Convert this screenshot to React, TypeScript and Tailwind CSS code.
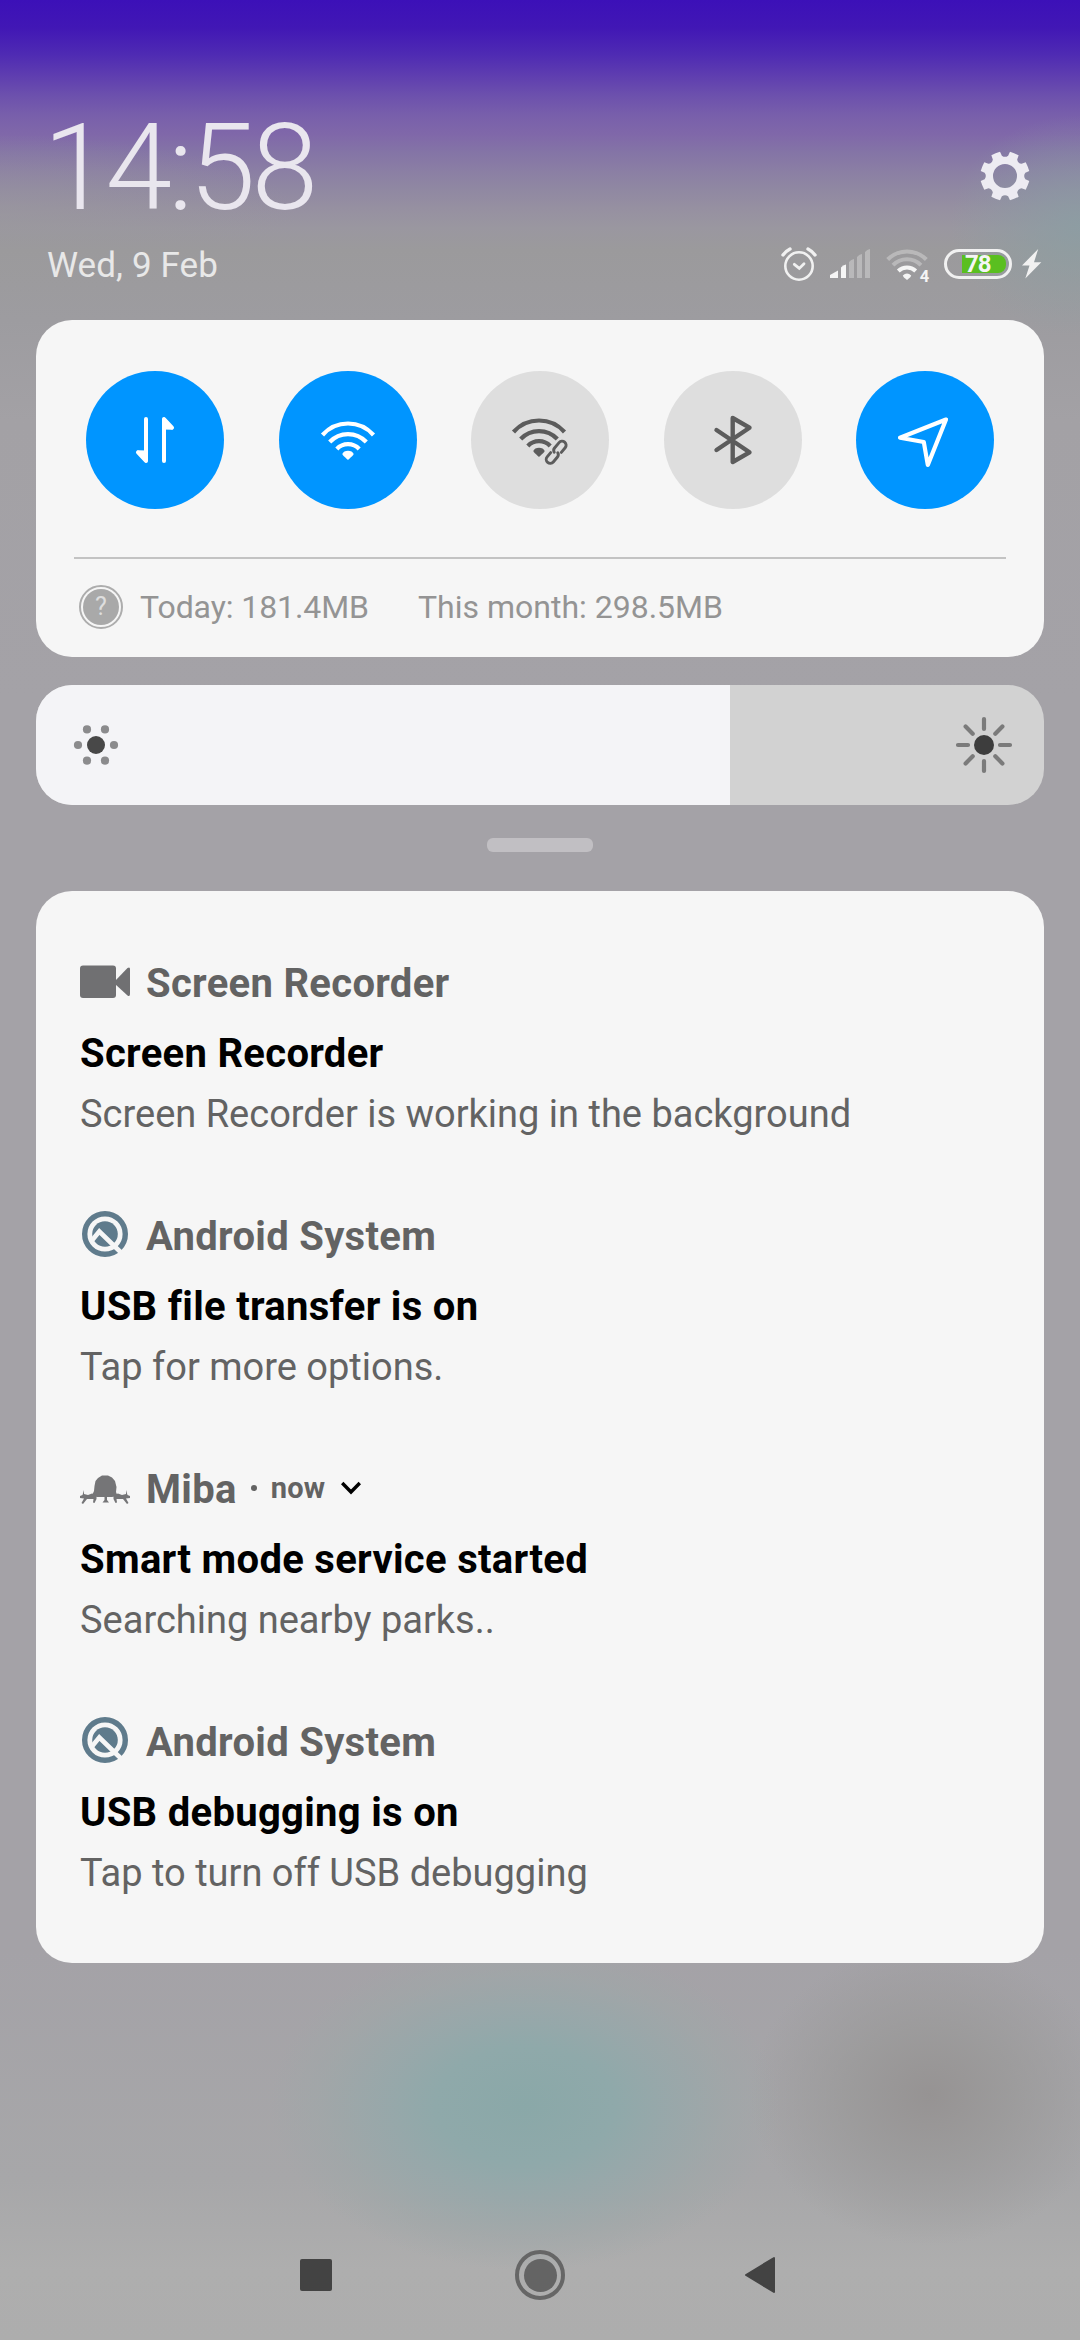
import type { ReactNode } from "react";

const gearPath = (() => {
  const pts: string[] = [];
  for (let i = 0; i < 8; i++) {
    const mid = (i * Math.PI) / 4 + Math.PI / 8;
    const p = (a: number, r: number) => `${(24 + r * Math.cos(a)).toFixed(2)} ${(24 + r * Math.sin(a)).toFixed(2)}`;
    pts.push(`${i === 0 ? "M" : "L"}${p(mid - 0.24, 20.6)}`);
    pts.push(`L${p(mid - 0.19, 24.8)}`);
    pts.push(`Q${p(mid, 24.8)} ${p(mid + 0.19, 24.8)}`);
    pts.push(`L${p(mid + 0.24, 20.6)}`);
    pts.push(`Q${p(mid + Math.PI / 8, 18)} ${p(mid + Math.PI / 4 - 0.24, 20.6)}`);
  }
  return pts.join("") + "ZM36 24A12 12 0 1 0 12 24A12 12 0 1 0 36 24Z";
})();

function Gear() {
  return (
    <svg width="48" height="48" viewBox="0 0 48 48" className="overflow-visible">
      <path d={gearPath} fill="#edebf2" fillRule="evenodd" />
    </svg>
  );
}

function Alarm() {
  return (
    <svg width="36" height="36" viewBox="782 246 36 36" fill="none" stroke="#f1f1f1" strokeLinecap="round">
      <circle cx="800" cy="266" r="13.7" strokeWidth="2.6" />
      <path d="M784 255Q787 251 791 249M816 255Q813 251 809 249" strokeWidth="3.4" />
      <path d="M795.3 264.3L800.3 268.4L805 263.8" strokeWidth="2.8" />
    </svg>
  );
}

function Signal() {
  return (
    <svg width="40" height="30" viewBox="831 249 40 30" fill="#f5f5f5">
      <path d="M831 278V275L839 270.500V278Z" />
      <path d="M842 278V267.500Q844 265 847 264.500V278Z" />
      <path opacity=".33" d="M850 278V262Q852 259.500 855 259V278ZM858 278V257Q860 254.500 863 254V278ZM866 278V252Q868 249.500 871 249V278Z" />
    </svg>
  );
}

function StatusWifi() {
  return (
    <svg width="44" height="40" viewBox="887 248 44 40" className="overflow-visible" fill="none" stroke="#f5f5f5">
      <path opacity=".33" strokeWidth="4" d="M888.700 259.500A27 27 0 0 1 927.300 259.500M894 265.200A19.500 19.500 0 0 1 922 265.200" />
      <path strokeWidth="4" d="M899.300 271A12.500 12.500 0 0 1 916.700 271" />
      <path fill="#f5f5f5" stroke="none" d="M903.800 275.500Q908 271.500 912.200 275.500Q912 277 908 280Q904 277 903.800 275.500Z" />
      <text x="920.800" y="282" fill="#f5f5f5" stroke="none" fontSize="16.500" fontWeight="700" fontFamily="Roboto">4</text>
    </svg>
  );
}

function Bolt() {
  return (
    <svg width="20" height="30" viewBox="0 0 20 30">
      <path fill="#f1f1f1" d="M16.200 0L0 16.500H7.500L3.300 29.500L19.300 13.300H12Z" />
    </svg>
  );
}

function DataIcon() {
  return (
    <svg width="138" height="138" viewBox="86 371 138 138" fill="none" stroke="#fff" strokeWidth="4" strokeLinecap="round" strokeLinejoin="round">
      <path d="M146 419V461L138 452.500" />
      <path d="M146 461V452L138 451.800ZM164 419V428L172 428.200Z" fill="#fff" strokeWidth="3" />
      <path d="M164 461V419L172 427.500" />
    </svg>
  );
}

function WifiArcs({ cx, cy, color }: { cx: number; cy: number; color: string }) {
  return (
    <g transform={`translate(${cx} ${cy})`} fill="none" stroke={color} strokeWidth="4.200">
      <path d="M-25.500 -24.500A34 34 0 0 1 25.500 -24.500M-18.300 -17.500A25 25 0 0 1 18.300 -17.500M-11.200 -10.500A15.300 15.300 0 0 1 11.200 -10.500" />
      <path fill={color} stroke="none" d="M-5.700 -5.500C-4.500 -10 4.500 -10 5.700 -5.500C5.500 -4 2 -1.500 0 0.500C-2 -1.500 -5.500 -4 -5.700 -5.500Z" />
    </g>
  );
}

function WifiIcon() {
  return (
    <svg width="138" height="138" viewBox="278 371 138 138">
      <WifiArcs cx={347} cy={459.500} color="#fff" />
    </svg>
  );
}

function HotspotIcon() {
  return (
    <svg width="138" height="138" viewBox="470 371 138 138" fill="none">
      <WifiArcs cx={538} cy={456.500} color="#5c5c5c" />
      <g transform="translate(555 452.500) rotate(-50)">
        <path d="M-13 -6.500H15V6.500H-13Z" fill="#dedede" />
        <g stroke="#5c5c5c" strokeWidth="2.900" strokeLinecap="round">
          <path d="M-3.500 -4H-9A4 4 0 0 0 -9 4H-2.500Q0 4 1 1.500" />
          <path d="M3.500 4H9.500A4 4 0 0 0 9.500 -4H2.500Q0 -4 -1 -1.500" />
        </g>
      </g>
    </svg>
  );
}

function BluetoothIcon() {
  return (
    <svg width="138" height="138" viewBox="663 371 138 138" fill="none" stroke="#5c5c5c" strokeWidth="4.400" strokeLinecap="round" strokeLinejoin="round">
      <path d="M715.500 430L748.500 452.300L731.700 462V418L748.500 427.700L715.500 450" />
    </svg>
  );
}

function LocationIcon() {
  return (
    <svg width="138" height="138" viewBox="856 371 138 138" fill="none" stroke="#fff" strokeWidth="4.200" strokeLinejoin="round">
      <path d="M946 419.500L900 437.700L923.800 442L927.800 465Z" />
    </svg>
  );
}

function LowSun() {
  return (
    <svg width="46" height="42" viewBox="-23 -21 46 42" fill="#8b8b8d">
      <circle r="9" fill="#484848" />
      <circle cx="-18" r="4.100" />
      <circle cx="18" r="4.100" />
      <circle cx="-9" cy="-15.600" r="4.100" />
      <circle cx="9" cy="-15.600" r="4.100" />
      <circle cx="-9" cy="15.600" r="4.100" />
      <circle cx="9" cy="15.600" r="4.100" />
    </svg>
  );
}

function HighSun() {
  return (
    <svg width="58" height="58" viewBox="-29 -29 58 58" stroke="#7b7b7b" strokeWidth="4.200" strokeLinecap="round">
      <circle r="10" fill="#3d3d3d" stroke="none" />
      <path d="M0 -16V-26M0 16V26M-16 0H-26M16 0H26M-11.300 -11.300L-18.400 -18.400M11.300 -11.300L18.400 -18.400M-11.300 11.300L-18.400 18.400M11.300 11.300L18.400 18.400" />
    </svg>
  );
}

function Camera() {
  return (
    <svg width="50" height="50" viewBox="80 957 50 50" fill="#707072">
      <rect x="80" y="965.500" width="36" height="32.500" rx="3" />
      <path d="M115 981L127.500 968Q130 966.500 130 969V994Q130 997 127.500 995.500L115 984Z" />
    </svg>
  );
}

function AndroidQ() {
  return (
    <svg width="50" height="50" viewBox="80 1209 50 50">
      <circle cx="105" cy="1233" r="20.300" fill="none" stroke="#5f7b8c" strokeWidth="5.400" />
      <circle cx="105" cy="1233" r="12.800" fill="#5f7b8c" />
      <path d="M91.500 1240L99.300 1230.500L121 1251.500" fill="none" stroke="#f6f6f6" strokeWidth="4.600" strokeLinejoin="miter" />
    </svg>
  );
}

function Tree() {
  return (
    <svg width="50" height="50" viewBox="80 1463 50 50" fill="#757577">
      <path d="M98 1478L102 1475.500H108L112 1477.500L115 1481L116.500 1487L116 1492L117.500 1496L112 1497H107V1500L109 1502.500H102.500L104.500 1500V1497H97L92 1495.500L94 1491L94.500 1486L95.500 1481Z" />
      <path d="M84 1490V1494L88 1495L92 1493.500L96.500 1495V1499L94.500 1503L93 1502.500L93.500 1499L87 1499L83 1504L81.500 1503L84 1498.500L80 1498V1496L82.500 1495Z" />
      <path d="M126 1490V1494L122 1495L118 1493.500L113.500 1495V1499L115.500 1503L117 1502.500L116.500 1499L123 1499L127 1504L128.500 1503L126 1498.500L130 1498V1496L127.500 1495Z" />
    </svg>
  );
}

function Toggle({ on = false, children }: { on?: boolean; children: ReactNode }) {
  return (
    <button className={`block size-[138px] rounded-full ${on ? "bg-[#0095ff]" : "bg-[#dedede]"}`}>{children}</button>
  );
}

type Note = { icon: ReactNode; app: string; title: string; body: string; time?: string };

const notes: Note[] = [
  { icon: <Camera />, app: "Screen Recorder", title: "Screen Recorder", body: "Screen Recorder is working in the background" },
  { icon: <AndroidQ />, app: "Android System", title: "USB file transfer is on", body: "Tap for more options." },
  { icon: <Tree />, app: "Miba", time: "now", title: "Smart mode service started", body: "Searching nearby parks.." },
  { icon: <AndroidQ />, app: "Android System", title: "USB debugging is on", body: "Tap to turn off USB debugging" },
];

function Notification({ note }: { note: Note }) {
  return (
    <article className="flex h-[253px] flex-col pl-11 pt-[36px]">
      <header className="flex h-[50px] items-center">
        {note.icon}
        <h2 className="ml-4 pt-1 text-[40px] leading-[50px] font-bold tracking-[0.300px] text-[#636363]">{note.app}</h2>
        {note.time && (
          <div className="flex items-center">
            <span className="ml-[14px] size-[6px] rounded-full bg-[#636363]" />
            <span className="ml-[14px] text-[29px] leading-[50px] font-bold tracking-[0.200px] text-[#636363]">{note.time}</span>
            <svg className="ml-4" width="20" height="14" viewBox="0 0 20 14" fill="none" stroke="#000" strokeWidth="3.400">
              <path d="M1.200 2L10 11L18.800 2" />
            </svg>
          </div>
        )}
      </header>
      <h3 className="mt-[22px] text-[40px] leading-[50px] font-bold tracking-[0.300px] text-black">{note.title}</h3>
      <p className="mt-[10px] text-[38px] leading-[50px] text-[#636363]">{note.body}</p>
    </article>
  );
}

export default function App() {
  return (
    <div className="flex h-[2340px] w-[1080px] flex-col overflow-hidden bg-[radial-gradient(ellipse_255px_165px_at_525px_2105px,#8aa8a8_0%,#8fa9aa_35%,#96a8aae6_55%,#9ea7a899_80%,#a5a6a800_100%),radial-gradient(ellipse_180px_150px_at_930px_2095px,#969393_0%,#9a9999cc_45%,#a4a2a700_100%),radial-gradient(ellipse_130px_110px_at_1080px_225px,#8a9ea3cc_0%,#8a9ea300_100%),radial-gradient(ellipse_300px_80px_at_0px_215px,#9b9a9c80_0%,#9b9a9c00_100%),linear-gradient(180deg,#3c10b8_0px,#4117b5_28px,#4f2bb3_55px,#5e3db0_75px,#6c50ad_95px,#785fab_115px,#8068a9_135px,#8474a6_152px,#8b7fa4_172px,#9088a2_190px,#9690a1_208px,#9a97a0_228px,#9b9a9c_250px,#9d9ca0_320px,#a3a1a5_420px,#a4a2a7_700px,#a4a2a7_1950px,#a7a7a9_2180px,#aeaeae_2270px,#adadad_2340px)] font-['Roboto',sans-serif]">
      <header className="flex h-[320px] shrink-0 justify-between pl-[47px]">
        <div className="flex flex-col">
          <time className="mt-[98px] -ml-[4px] text-[120px] leading-[140px] font-light tracking-[-4.100px] text-[#e9e6ee]">14:58</time>
          <span className="mt-[6px] text-[35px] leading-[44px] tracking-[0.1px] text-[#e8e8e8]">Wed, 9 Feb</span>
        </div>
        <div className="flex flex-col items-end pr-[38px]">
          <div className="mt-[152px] mr-[13px]">
            <Gear />
          </div>
          <div className="mt-[46px] flex h-9 items-center">
            <Alarm />
            <div className="ml-[13px]"><Signal /></div>
            <div className="mt-2 ml-4"><StatusWifi /></div>
            <div className="ml-[14px] flex h-[30px] w-[68px] items-center rounded-full border-[3px] border-[#f1f1f1] pl-[15px]">
              <div className="flex h-[18px] w-11 items-center rounded-r-[8px] bg-[#5abf20] pl-[3px] text-[24px] leading-[28px] font-bold tracking-[-1px] text-[#f5f5f5]">78</div>
            </div>
            <div className="ml-[10px]"><Bolt /></div>
          </div>
        </div>
      </header>

      <section className="mx-9 h-[337px] shrink-0 rounded-[36px] bg-[#f6f6f6]">
        <div className="flex justify-between px-[50px] pt-[51px]">
          <Toggle on><DataIcon /></Toggle>
          <Toggle on><WifiIcon /></Toggle>
          <Toggle><HotspotIcon /></Toggle>
          <Toggle><BluetoothIcon /></Toggle>
          <Toggle on><LocationIcon /></Toggle>
        </div>
        <div className="mx-[38px] mt-12 h-[2px] bg-[#c3c3c3]" />
        <div className="mt-[26px] flex h-[44px] items-center pl-[43px] text-[32px] text-[#949494]">
          <div className="flex size-[44px] items-center justify-center rounded-full border-2 border-[#adadad]">
            <span className="flex size-9 items-center justify-center rounded-full bg-[#a9a9a9] text-[25px] text-[#dedede]">?</span>
          </div>
          <span className="ml-[17px] tracking-[-0.080px]">Today: 181.4MB</span>
          <span className="ml-[49px]">This month: 298.5MB</span>
        </div>
      </section>

      <div className="mx-9 mt-7 flex h-[120px] shrink-0 overflow-hidden rounded-[36px] bg-[#d2d2d2]">
        <div className="flex w-[694px] items-center bg-[#f4f4f7] pl-[37px]"><LowSun /></div>
        <div className="flex flex-1 items-center justify-end pr-[31px]"><HighSun /></div>
      </div>

      <div className="mt-[33px] h-[14px] w-[106px] shrink-0 self-center rounded-[6px] bg-[#c1bfc3]" />

      <main className="mx-9 mt-[39px] h-[1072px] shrink-0 rounded-[36px] bg-[#f6f6f6] pt-[30px]">
        {notes.map((note, i) => <Notification key={i} note={note} />)}
      </main>

      <nav className="mt-[286px] flex h-[52px] shrink-0 items-center pl-[300px]">
        <div className="size-8 rounded-[2px] bg-[#434343]" />
        <div className="ml-[183px] flex size-[50px] items-center justify-center rounded-full border-4 border-[#666]">
          <div className="size-[33px] rounded-full bg-[#646464]" />
        </div>
        <svg className="ml-[179px]" width="32" height="38" viewBox="0 0 32 38" fill="#434343" stroke="#434343" strokeWidth="2" strokeLinejoin="round">
          <path d="M2 19L30 2V36Z" />
        </svg>
      </nav>
    </div>
  );
}
